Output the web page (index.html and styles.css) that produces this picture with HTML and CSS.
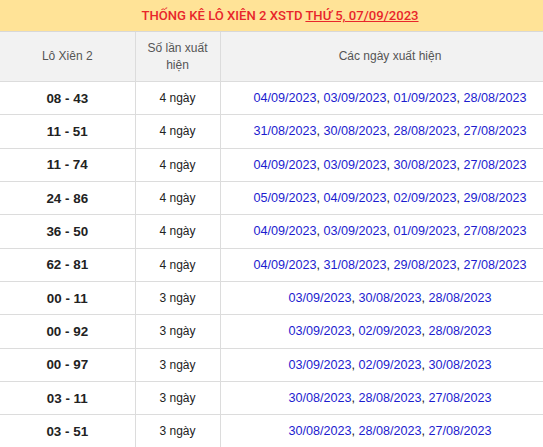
FILE: index.html
```html
<!DOCTYPE html>
<html lang="vi">
<head>
<meta charset="utf-8">
<title>Thống kê lô xiên 2 XSTD</title>
<link rel="stylesheet" href="styles.css">
</head>
<body>
<div class="wrap">
  <table class="stats">
    <colgroup>
      <col class="c1">
      <col class="c2">
      <col class="c3">
    </colgroup>
    <thead>
      <tr class="title-row">
        <th colspan="3" class="title">THỐNG KÊ LÔ XIÊN 2 XSTD <a href="#" class="title-link">THỨ 5, 07/09/2023</a></th>
      </tr>
      <tr class="head-row">
        <th>Lô Xiên 2</th>
        <th>Số lần xuất hiện</th>
        <th>Các ngày xuất hiện</th>
      </tr>
    </thead>
    <tbody>
      <tr><td class="pair">08 - 43</td><td class="count">4 ngày</td><td class="dates"><a href="#">04/09/2023</a>, <a href="#">03/09/2023</a>, <a href="#">01/09/2023</a>, <a href="#">28/08/2023</a></td></tr>
      <tr><td class="pair">11 - 51</td><td class="count">4 ngày</td><td class="dates"><a href="#">31/08/2023</a>, <a href="#">30/08/2023</a>, <a href="#">28/08/2023</a>, <a href="#">27/08/2023</a></td></tr>
      <tr><td class="pair">11 - 74</td><td class="count">4 ngày</td><td class="dates"><a href="#">04/09/2023</a>, <a href="#">03/09/2023</a>, <a href="#">30/08/2023</a>, <a href="#">27/08/2023</a></td></tr>
      <tr><td class="pair">24 - 86</td><td class="count">4 ngày</td><td class="dates"><a href="#">05/09/2023</a>, <a href="#">04/09/2023</a>, <a href="#">02/09/2023</a>, <a href="#">29/08/2023</a></td></tr>
      <tr><td class="pair">36 - 50</td><td class="count">4 ngày</td><td class="dates"><a href="#">04/09/2023</a>, <a href="#">03/09/2023</a>, <a href="#">01/09/2023</a>, <a href="#">27/08/2023</a></td></tr>
      <tr><td class="pair">62 - 81</td><td class="count">4 ngày</td><td class="dates"><a href="#">04/09/2023</a>, <a href="#">31/08/2023</a>, <a href="#">29/08/2023</a>, <a href="#">27/08/2023</a></td></tr>
      <tr><td class="pair">00 - 11</td><td class="count">3 ngày</td><td class="dates"><a href="#">03/09/2023</a>, <a href="#">30/08/2023</a>, <a href="#">28/08/2023</a></td></tr>
      <tr><td class="pair">00 - 92</td><td class="count">3 ngày</td><td class="dates"><a href="#">03/09/2023</a>, <a href="#">02/09/2023</a>, <a href="#">28/08/2023</a></td></tr>
      <tr><td class="pair">00 - 97</td><td class="count">3 ngày</td><td class="dates"><a href="#">03/09/2023</a>, <a href="#">02/09/2023</a>, <a href="#">30/08/2023</a></td></tr>
      <tr><td class="pair">03 - 11</td><td class="count">3 ngày</td><td class="dates"><a href="#">30/08/2023</a>, <a href="#">28/08/2023</a>, <a href="#">27/08/2023</a></td></tr>
      <tr><td class="pair">03 - 51</td><td class="count">3 ngày</td><td class="dates"><a href="#">30/08/2023</a>, <a href="#">28/08/2023</a>, <a href="#">27/08/2023</a></td></tr>
    </tbody>
  </table>
</div>
</body>
</html>
```
FILE: styles.css
```css
html, body {
  margin: 0;
  padding: 0;
  background: #fff;
}
.wrap {
  width: 543px;
  overflow: hidden;
}
.stats {
  width: 560px;
  border-collapse: collapse;
  table-layout: fixed;
  font-family: "Liberation Sans", Arial, sans-serif;
  font-size: 13px;
  color: #222;
}
.c1 { width: 135px; }
.c2 { width: 85px; }
.c3 { width: 340px; }
.title {
  background: #ffe397;
  color: #e8262b;
  font-family: Roboto, "Liberation Sans", sans-serif;
  font-weight: 500;
  font-size: 13.1px;
  height: 31px;
  padding: 0;
  text-align: center;
  border-bottom: 1px solid #d8d8d8;
}
.title-link {
  color: #e8262b;
  text-decoration: underline;
}
.head-row th {
  background: #f2f2f2;
  color: #555;
  font-weight: normal;
  font-size: 12px;
  line-height: 17px;
  height: 50px;
  padding: 0 8px;
  box-sizing: border-box;
  border: 1px solid #dcdcdc;
  border-top: none;
}
.stats td {
  height: 33.33px;
  box-sizing: border-box;
  padding: 0 6px;
  text-align: center;
  border: 1px solid #dcdcdc;
}
.pair {
  font-weight: bold;
  font-size: 13.4px;
}
.count {
  font-size: 12px;
}
.dates {
  font-size: 12.6px;
  color: #222;
}
.dates a {
  color: #1c1ccf;
  text-decoration: none;
}
tr td:first-child, tr th:first-child { border-left: none; }
```
